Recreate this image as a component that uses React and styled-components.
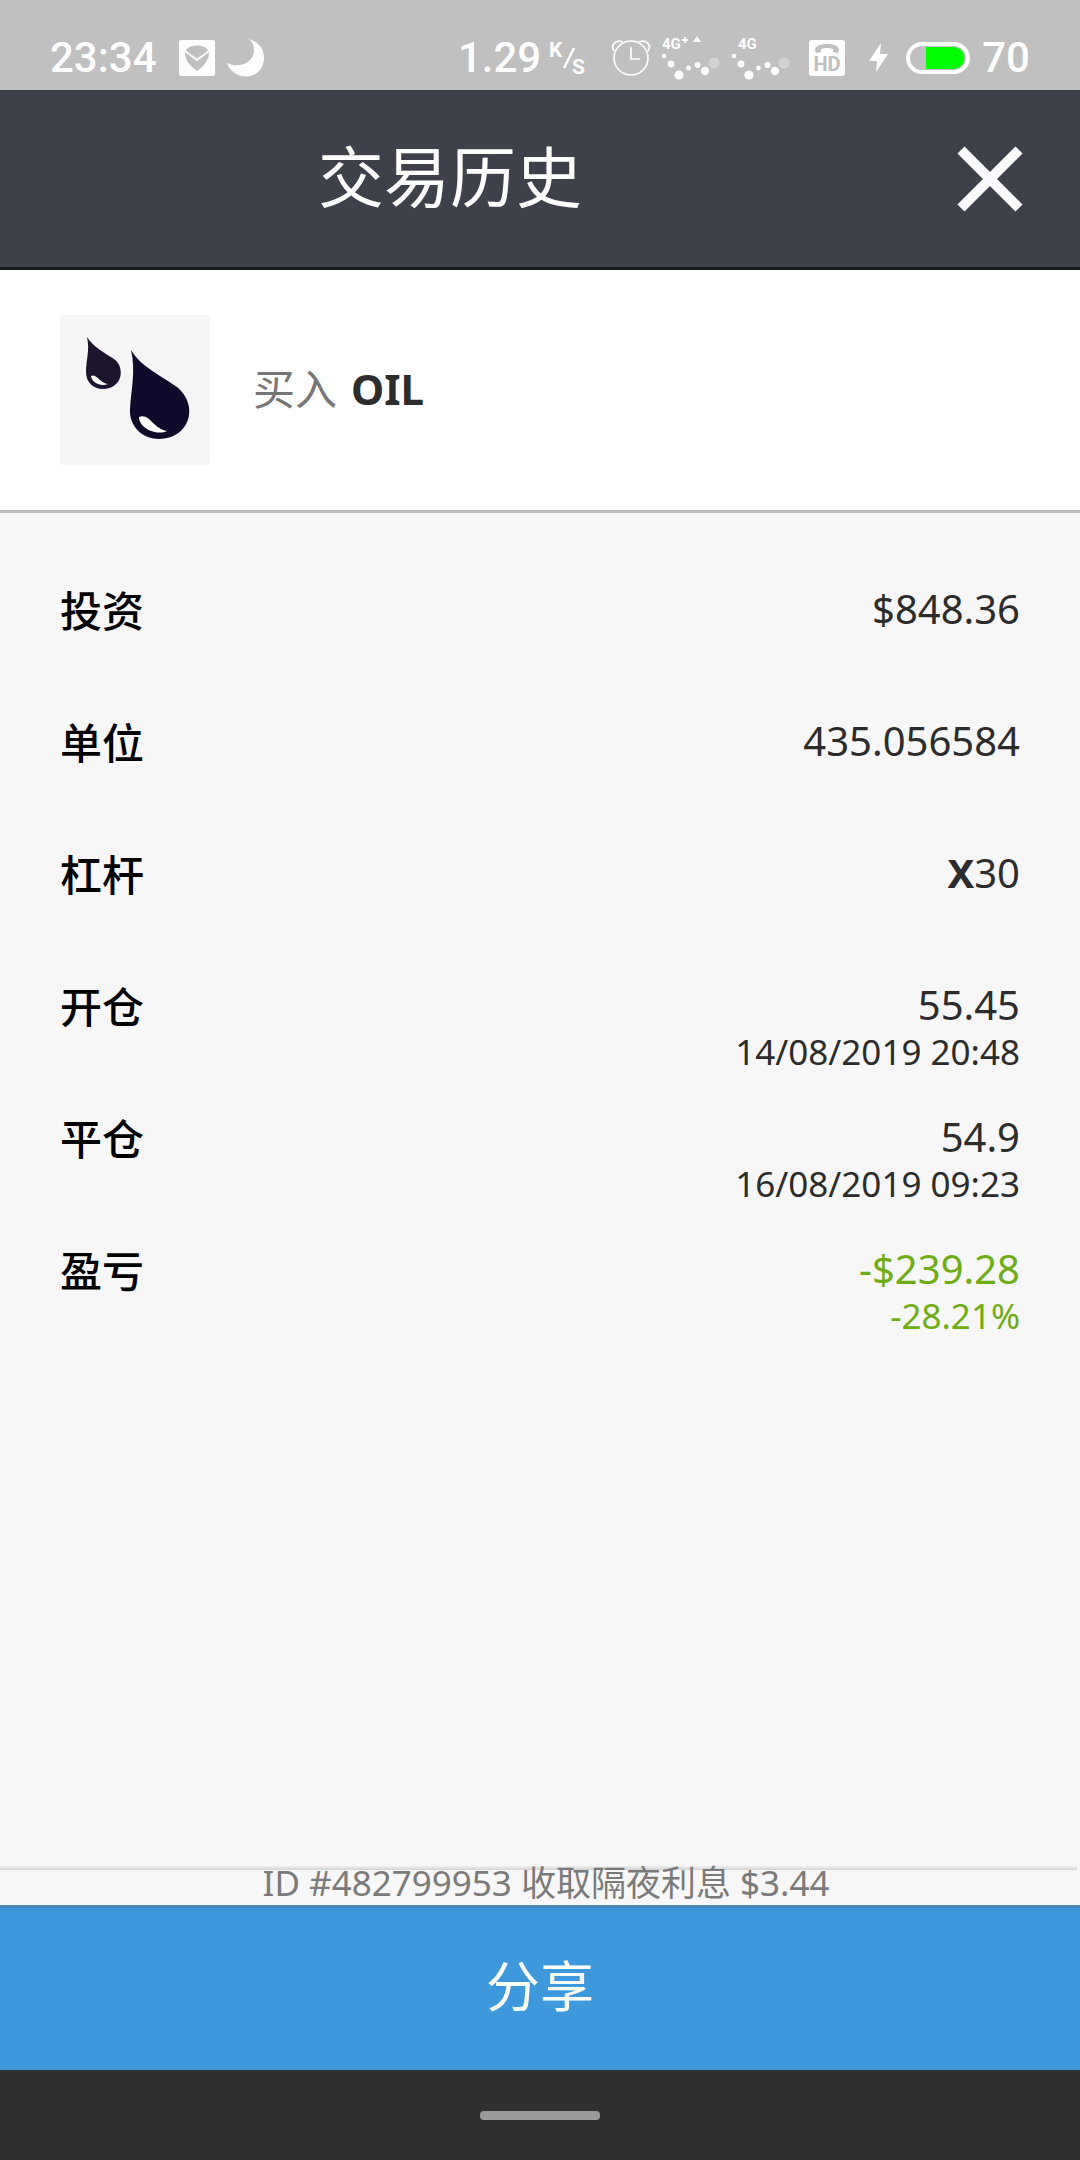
import React, { Component } from 'react';
import styled, { createGlobalStyle, css } from 'styled-components';

const GlobalStyle = createGlobalStyle`
  body {
    margin: 0;
    background-color: #f7f7f7;
    font-family: 'Noto Sans', 'Noto Sans CJK SC', sans-serif;
  }

  *, *::before, *::after {
    box-sizing: border-box;
  }
`

const Screen = styled.div`
  display: flex;
  flex-direction: column;
  min-height: 100vh;
  color: #2c2c2c;
`

const StatusBar = styled.div`
  display: flex;
  align-items: center;
  justify-content: space-between;
  padding: 26px 50px 0;
  height: 90px;
  background-color: #c0c0c0;
  color: #fff;
  font-family: Roboto, sans-serif;
  font-size: 42px;
  font-weight: 500;
  line-height: 64px;

  svg {
    display: block;
    flex: none;
  }
`

const StatusGroup = styled.div`
  display: flex;
  align-items: center;
  gap: ${props => props.$gap}px;
`

const Header = styled.header`
  display: flex;
  align-items: center;
  height: 180px;
  background-color: #3e404a;
  border-bottom: 3px solid #191a21;
`

const Title = styled.h1`
  flex: 1;
  margin: 0;
  padding-bottom: 6px;
  color: #fff;
  font-size: 66px;
  font-weight: 400;
  line-height: 90px;
  text-align: center;
`

const CloseButton = styled.button`
  display: flex;
  align-items: center;
  justify-content: center;
  width: 180px;
  height: 100%;
  padding: 0;
  border: 0;
  background: none;
  cursor: pointer;
`

const Instrument = styled.section`
  display: flex;
  align-items: center;
  gap: 43px;
  height: 243px;
  padding: 0 60px;
  background-color: #fff;
  border-bottom: 3px solid #bdbdbd;
`

const InstrumentIcon = styled.svg`
  display: block;
  width: 150px;
  height: 150px;
  border-radius: 2px;
  background-color: #f5f5f5;
`

const InstrumentName = styled.p`
  display: flex;
  gap: 14px;
  margin: 0;
  padding-bottom: 2px;
  color: #767676;
  font-size: 42px;
  line-height: 60px;

  strong {
    color: #2c2c2c;
    font-weight: 700;
  }
`

const Details = styled.dl`
  flex: 1;
  margin: 0;
  padding: 66px 60px 0;
`

const DetailRow = styled.div`
  display: flex;
  justify-content: space-between;
  min-height: 132px;
`

const Label = styled.dt`
  color: #000;
  font-size: 42px;
  font-weight: 500;
  line-height: 64px;
`

const Value = styled.dd`
  margin: 0;
  text-align: right;
  font-size: 40px;
  line-height: 60px;

  ${props => props.$result && css`
    color: #6fad14;
  `}
`

const SubValue = styled.div`
  font-size: 35px;
  line-height: 34px;
`

/* the divider runs just behind the top of the text */
const Note = styled.p`
  margin: 0;
  padding: 3px 0 8px 12px;
  background: linear-gradient(#f0f0f0, #d2d2d2) no-repeat left top / calc(100% - 3px) 4px;
  color: #7a7a7a;
  font-size: 35px;
  line-height: 28px;
  text-align: center;
`

const ShareButton = styled.button`
  height: 165px;
  padding: 0 0 12px;
  border: 0;
  border-top: 3px solid #4b8ab8;
  background-color: #3d99dc;
  color: #fff;
  font-family: inherit;
  font-size: 54px;
  cursor: pointer;
`

const NavBar = styled.div`
  display: flex;
  align-items: center;
  justify-content: center;
  height: 90px;
  background-color: #303030;
`

const Handle = styled.div`
  width: 120px;
  height: 9px;
  border-radius: 4px;
  background-color: #999;
`

const MailIcon = () => (
  <svg width="36" height="36" viewBox="0 0 36 36">
    <rect width="36" height="36" rx="2" fill="#fff" />
    <path d="M6 12C8 7.500 12 5.500 18 5.500S28 7.500 30 12C30.500 20 24 27 18 31C12 27 5.500 20 6 12Z" fill="#c0c0c0" />
    <path d="M6 11L18 20L30 11" fill="none" stroke="#fff" strokeWidth="2" />
  </svg>
)

const MoonIcon = () => (
  <svg width="38" height="38" viewBox="0 0 38 38">
    <path d="M22 0C32 3 37 10 37 19C37 30 29 37.500 19 37.500C10 37.500 3 32 0 24C12 30 26 24 27 12C27 7 26 4 22 0Z" fill="#fff" />
  </svg>
)

const SpeedUnit = () => (
  <svg width="38" height="50" viewBox="0 -6 38 50" fill="#fff" fontFamily="Roboto, sans-serif" fontWeight="700">
    <text x="0" y="18" fontSize="21">K</text>
    <path d="M25 9L15 29" stroke="#fff" strokeWidth="2.500" />
    <text x="23" y="35" fontSize="21">S</text>
  </svg>
)

const AlarmIcon = () => (
  <svg width="40" height="38" viewBox="0 0 40 38" fill="none" stroke="#fff" strokeWidth="1.700">
    <circle cx="20" cy="19" r="17" />
    <path d="M3 12C-1 6 5 0 12 3M37 12C41 6 35 0 28 3" />
    <path d="M20 8V20H29" />
  </svg>
)

const SignalIcon = ({ label, labelX, plus }) => (
  <svg width="60" height="52" viewBox="0 -4 60 52" fill="#fff">
    <text x={labelX} y="13" fontFamily="Roboto, sans-serif" fontWeight="700" fontSize="15">{label}</text>
    {plus && <path d="M21 4H27M24 1V7" stroke="#fff" strokeWidth="2" />}
    {plus && <path d="M32 6L36 0L40 6Z" />}
    <circle cx="3" cy="20" r="2.300" />
    <circle cx="10" cy="28" r="3.400" />
    <circle cx="18" cy="39" r="4.600" />
    <circle cx="27.500" cy="32" r="2.400" />
    <circle cx="36.500" cy="29" r="3.100" />
    <circle cx="44" cy="35" r="4.200" />
    <circle cx="53" cy="27" r="5.500" opacity="0.300" />
  </svg>
)

const HdIcon = () => (
  <svg width="36" height="36" viewBox="0 0 36 36">
    <rect width="36" height="36" rx="3" fill="#fff" />
    <path d="M6 10C6 2 30 2 30 10L29 13L24 12V9C21 7.500 15 7.500 12 9V12L7 13Z" fill="#c0c0c0" />
    <text x="18" y="31" textAnchor="middle" fontFamily="Roboto, sans-serif" fontWeight="700" fontSize="20" fill="#c0c0c0">HD</text>
  </svg>
)

const BoltIcon = () => (
  <svg width="20" height="30" viewBox="0 0 20 30">
    <path d="M12 0L0 18H8L7 29L19 11H11Z" fill="#fff" />
  </svg>
)

const BatteryIcon = () => (
  <svg width="64" height="32" viewBox="0 0 64 32">
    <rect x="2" y="2" width="60" height="28" rx="14" fill="none" stroke="#fff" strokeWidth="4" />
    <path d="M20 5H47C62 5 62 27 47 27H20Z" fill="#0f0" />
  </svg>
)

const CloseIcon = () => (
  <svg width="66" height="66" viewBox="0 0 66 66">
    <path d="M4 4L62 62M62 4L4 62" stroke="#f9fafb" strokeWidth="10" />
  </svg>
)

const OilIcon = () => (
  <InstrumentIcon viewBox="0 0 150 150">
    <path d="M27 22C33 32 45 38 54 44C66 53 62 74 43 74C33 74 26 67 26 57C26 45 30 36 27 22Z" fill="#1c142c" />
    <path d="M31 61C36 58 40 68 48 69C41 72 32 68 31 61Z" fill="#fff" />
    <path d="M71 35C81 52 102 61 117 72C140 91 129 124 99 124C81 124 69 110 70 94C71 75 76 56 71 35Z" fill="#100a2a" />
    <path d="M79 102C90 98 93 114 107 116C96 121 79 113 79 102Z" fill="#fff" />
  </InstrumentIcon>
)

const details = [
  { label: '投资', value: '$848.36' },
  { label: '单位', value: '435.056584' },
  { label: '杠杆', value: <><b>X</b>30</> },
  { label: '开仓', value: '55.45', sub: '14/08/2019 20:48' },
  { label: '平仓', value: '54.9', sub: '16/08/2019 09:23' },
  { label: '盈亏', value: '-$239.28', sub: '-28.21%', result: true },
]

class App extends Component {
  render() {
    return (
      <Screen>
        <GlobalStyle />
        <StatusBar>
          <StatusGroup $gap={22}>
            <span>23:34</span>
            <StatusGroup $gap={12}>
              <MailIcon />
              <MoonIcon />
            </StatusGroup>
          </StatusGroup>
          <StatusGroup $gap={24}>
            <StatusGroup $gap={8}>
              <span>1.29</span>
              <SpeedUnit />
            </StatusGroup>
            <StatusGroup $gap={18}>
              <StatusGroup $gap={10}>
                <AlarmIcon />
                <SignalIcon label="4G" labelX={1} plus />
                <SignalIcon label="4G" labelX={7} />
              </StatusGroup>
              <HdIcon />
            </StatusGroup>
            <StatusGroup $gap={12}>
              <StatusGroup $gap={17}>
                <BoltIcon />
                <BatteryIcon />
              </StatusGroup>
              <span>70</span>
            </StatusGroup>
          </StatusGroup>
        </StatusBar>
        <Header>
          <Title>交易历史</Title>
          <CloseButton aria-label="关闭">
            <CloseIcon />
          </CloseButton>
        </Header>
        <Instrument>
          <OilIcon />
          <InstrumentName>买入 <strong>OIL</strong></InstrumentName>
        </Instrument>
        <Details>
          {details.map(({ label, value, sub, result }) => (
            <DetailRow key={label}>
              <Label>{label}</Label>
              <Value $result={result}>
                {value}
                {sub && <SubValue>{sub}</SubValue>}
              </Value>
            </DetailRow>
          ))}
        </Details>
        <Note>ID #482799953 收取隔夜利息 $3.44</Note>
        <ShareButton>分享</ShareButton>
        <NavBar>
          <Handle />
        </NavBar>
      </Screen>
    )
  }
}

export default App
